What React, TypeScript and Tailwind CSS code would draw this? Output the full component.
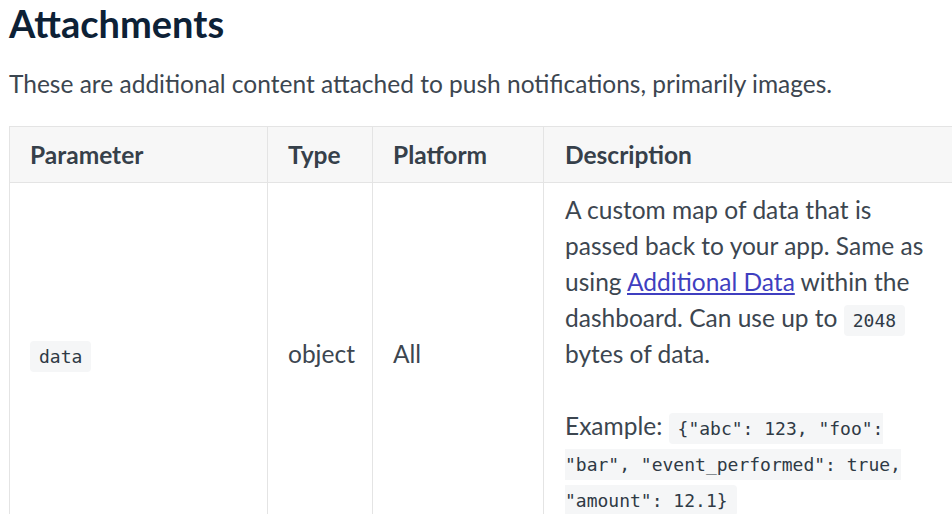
import React from "react";

const code =
  "bg-[#f5f6f7] rounded-[4px] px-[9px] py-[5px] text-[18px] leading-none text-[#2f3a45]";
const mono = { fontFamily: "'DejaVu Sans Mono', monospace" };

export default function App() {
  return (
    <div
      className="w-[952px] h-[514px] overflow-hidden bg-white pl-[9px]"
      style={{ fontFamily: "Lato, 'Open Sans', sans-serif" }}
    >
      <h1 className="text-[38px] leading-[46px] font-bold text-[#0d2136]">
        Attachments
      </h1>
      <p className="mt-[20px] text-[24.5px] leading-[36px] text-[#3c4650]">
        These are additional content attached to push notifications, primarily images.
      </p>
      <table className="mt-[24px] table-fixed border-collapse text-[24.5px] leading-[36px] text-[#3c4650] w-[1000px]">
        <colgroup>
          <col className="w-[258px]" />
          <col className="w-[105px]" />
          <col className="w-[171px]" />
          <col className="w-[466px]" />
        </colgroup>
        <thead>
          <tr className="bg-[#f7f7f7] h-[56px]">
            <th className="border border-[#e4e4e4] text-left font-bold px-[20px] text-[#36404a]">Parameter</th>
            <th className="border border-[#e4e4e4] text-left font-bold px-[20px] text-[#36404a]">Type</th>
            <th className="border border-[#e4e4e4] text-left font-bold px-[20px] text-[#36404a]">Platform</th>
            <th className="border border-[#e4e4e4] text-left font-bold px-[21px] text-[#36404a]">Description</th>
          </tr>
        </thead>
        <tbody>
          <tr>
            <td className="border border-[#e4e4e4] px-[20px] py-[9px] align-middle">
              <code className={code} style={mono}>data</code>
            </td>
            <td className="border border-[#e4e4e4] px-[20px] py-[9px] align-middle">object</td>
            <td className="border border-[#e4e4e4] px-[20px] py-[9px] align-middle">All</td>
            <td className="border border-[#e4e4e4] px-[21px] py-[9px] align-middle">
              <p>
                A custom map of data that is
                <br />
                passed back to your app. Same as
                <br />
                using{" "}
                <a href="#" className="text-[#3f3fc0] underline">
                  Additional Data
                </a>{" "}
                within the
                <br />
                dashboard. Can use up to{" "}
                <code className={code} style={mono}>2048</code>
                <br />
                bytes of data.
              </p>
              <p className="mt-[36px]">
                Example:{" "}
                <code className={code} style={mono}>
                  {'{"abc": 123, "foo":'}
                  <br />
                  {'"bar", "event_performed": true,'}
                  <br />
                  {'"amount": 12.1}'}
                </code>
              </p>
            </td>
          </tr>
        </tbody>
      </table>
    </div>
  );
}
